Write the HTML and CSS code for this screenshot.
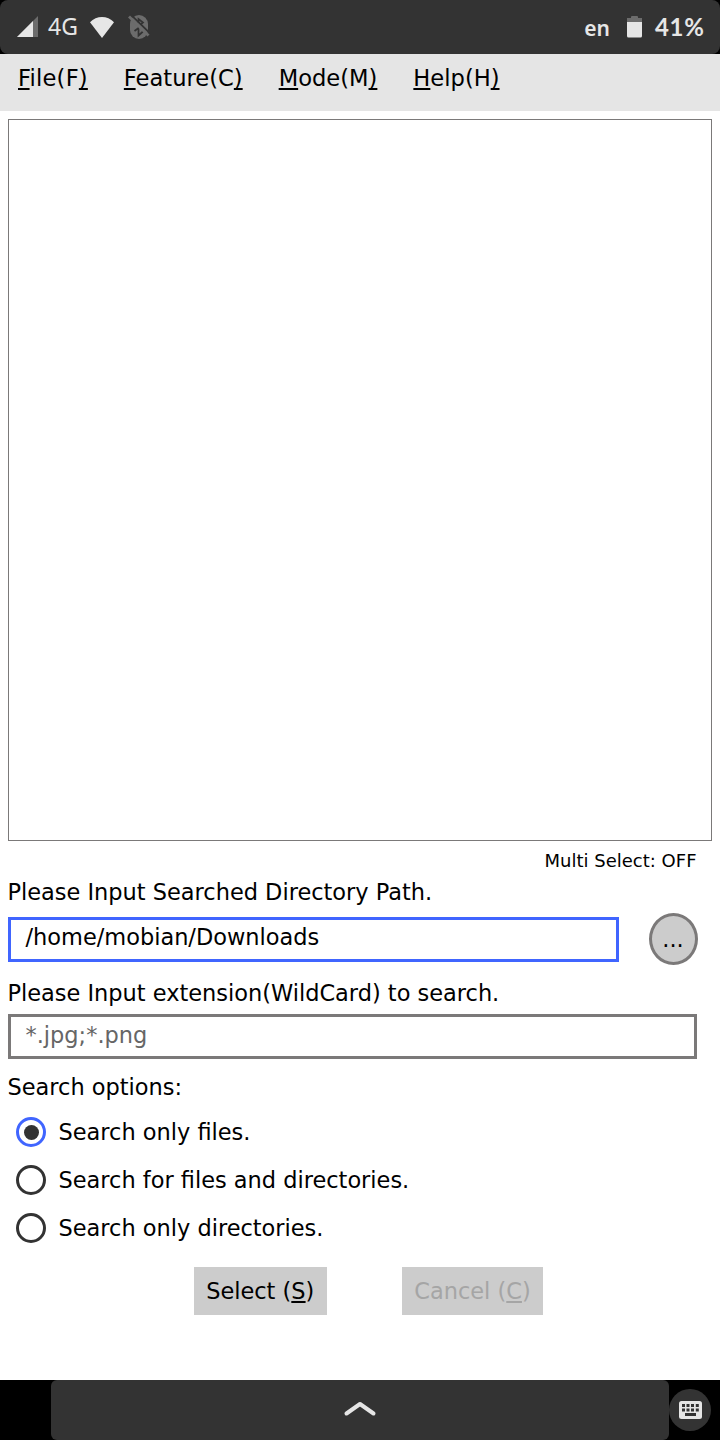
FILE: index.html
```html
<!DOCTYPE html>
<html lang="en">
<head>
<meta charset="utf-8">
<title>File search</title>
<link rel="stylesheet" href="styles.css">
</head>
<body>
<div class="screen">
  <div class="status-wrap">
    <header class="status">
      <svg class="signal" width="22" height="22" viewBox="0 0 22 22"><path d="M21 0v21H0z" fill="#6c6c6c"/><path d="M16 5v16H0z" fill="#e6e6e6"/></svg>
      <span class="network">4G</span>
      <svg class="wifi" width="24" height="21" viewBox="0 0 24 21"><path d="M0 5.2C6.5-1.7 17.500-1.7 24 5.200L12 21z" fill="#e6e6e6"/></svg>
      <svg class="bluetooth" width="22" height="26" viewBox="0 0 22 26">
        <rect x="2" y="1" width="18" height="24" rx="9" fill="#6c6c6c"/>
        <path d="M6.500 17L10.500 14V21.500L15 17.500M10.500 9V5L15 8.500L12.500 10.500" fill="none" stroke="#333" stroke-width="1.700"/>
        <path d="M3 .8L21.500 18.800" stroke="#333" stroke-width="1.800"/>
        <path d="M1 2.500L20.500 21.500" stroke="#6c6c6c" stroke-width="2.800"/>
      </svg>
      <span class="language">en</span>
      <svg class="battery" width="15" height="22" viewBox="0 0 15 22"><path d="M0 2h4V1q0-1 1-1h5q1 0 1 1v1h4v5H0z" fill="#6c6c6c"/><path d="M0 6h15v14q0 1.500-1.500 1.500h-12Q0 21.500 0 20z" fill="#e6e6e6"/></svg>
      <span class="percent">41%</span>
    </header>
  </div>
  <nav class="menu">
    <span class="first"><u>F</u>ile(F<u>)</u></span>
    <span><u>F</u>eature(C<u>)</u></span>
    <span><u>M</u>ode(M<u>)</u></span>
    <span><u>H</u>elp(H<u>)</u></span>
  </nav>
  <main class="content">
    <div class="results"></div>
    <div class="multi">Multi Select: OFF</div>
    <div class="label path-label">Please Input Searched Directory Path.</div>
    <div class="path-row">
      <div class="field path-field">/home/mobian/Downloads</div>
      <div class="browse"><span>...</span></div>
    </div>
    <div class="label ext-label">Please Input extension(WildCard) to search.</div>
    <div class="field ext-field">*.jpg;*.png</div>
    <div class="label options-label">Search options:</div>
    <div class="options">
      <div class="option"><span class="radio checked"></span><span>Search only files.</span></div>
      <div class="option"><span class="radio"></span><span>Search for files and directories.</span></div>
      <div class="option"><span class="radio"></span><span>Search only directories.</span></div>
    </div>
    <div class="actions">
      <div class="button select">Select (<u>S</u>)</div>
      <div class="button cancel">Cancel (<u>C</u>)</div>
    </div>
  </main>
  <footer class="bottom">
    <div class="home"><svg width="34" height="18" viewBox="0 0 34 18"><path d="M3.500 12.500L17 3L30.500 12.500" fill="none" stroke="#e6e6e6" stroke-width="4" stroke-linecap="round" stroke-linejoin="round"/></svg></div>
    <div class="keyboard"><svg width="23" height="18" viewBox="0 0 23 18"><rect width="23" height="18" rx="2.500" fill="#e6e6e6"/><path d="M3 3h3v3H3zM7.500 3h3v3h-3zM12 3h3v3h-3zM16.800 3h3v3h-3zM3 7.500h3v3H3zM7.500 7.500h3v3h-3zM12 7.500h3v3h-3zM16.800 7.500h3v3h-3zM6 12h11v3H6z" fill="#333"/></svg></div>
  </footer>
</div>
</body>
</html>
```
FILE: styles.css
```css
* { box-sizing: border-box; }
body { margin: 0; background: #fff; color: #000; font-family: "DejaVu Sans", sans-serif; font-size: 22.46px; }
svg { display: block; flex: none; }
.screen { width: 720px; height: 1440px; display: flex; flex-direction: column; overflow: hidden; white-space: nowrap; }
.status-wrap { height: 54px; background: #000; flex: none; }
.status { height: 54px; background: #333; border-radius: 8px; display: flex; align-items: center; padding: 0 15px 0 17px; color: #e6e6e6; font-family: "Noto Sans", sans-serif; }
.network { width: 30px; margin-left: 9px; font-size: 23px; padding-bottom: 2px; }
.wifi { margin-left: 12px; }
.bluetooth { margin-left: 14px; }
.language { margin-left: auto; font-size: 21px; font-weight: 600; padding-top: 1px; }
.battery { margin-left: 17px; }
.percent { width: 50px; margin-left: 13px; padding-bottom: 2px; font-family: Lato, sans-serif; font-weight: 700; font-size: 24px; letter-spacing: 0.7px; }
.menu { height: 57px; flex: none; background: #e5e5e5; display: flex; gap: 36px; padding: 10.6px 18px; font-size: 22.6px; line-height: 27px; }
.first { letter-spacing: 0.2px; }
u { text-decoration-thickness: 1.5px; text-underline-offset: 2px; text-decoration-skip-ink: none; }
.content { height: 1269px; flex: none; padding: 8px 7.5px; }
.results { width: 704.5px; height: 722px; border: 1.5px solid #7b7979; }
.multi { height: 24px; margin-top: 8px; padding-right: 16px; text-align: right; font-size: 18px; line-height: 24px; }
.label { height: 28px; line-height: 28px; }
.path-label { margin-top: 5px; }
.path-row { display: flex; align-items: center; gap: 29.5px; height: 52px; margin-top: 7px; }
.field { height: 45px; border: 3px solid #7b7979; padding: 0 15px; line-height: 36px; }
.path-field { width: 611.5px; border-color: #4065ff; line-height: 34px; }
.browse { width: 49px; height: 52px; border-radius: 50%; border: 3px solid #7b7979; background: #ccc; display: flex; justify-content: center; align-items: center; }
.ext-label { margin-top: 14px; }
.ext-field { width: 689.5px; margin-top: 7px; color: #666; }
.options-label { margin-top: 14px; }
.options { padding: 7px 0 0 8.5px; }
.option { display: flex; align-items: center; gap: 12.5px; height: 48px; }
.radio { width: 30px; height: 30px; border: 3px solid #333; border-radius: 50%; display: flex; }
.radio.checked { border-color: #4065ff; }
.checked::before { content: ""; margin: auto; width: 15px; height: 15px; border-radius: 50%; background: #333; }
.option span + span { line-height: 28px; }
.actions { display: flex; gap: 75px; padding: 15px 0 0 186px; }
.button { height: 48px; line-height: 48px; width: 133.500px; background: #ccc; text-align: center; }
.cancel { width: 141px; color: #a5a5a5; }
.bottom { height: 60px; flex: none; background: #000; display: flex; align-items: center; padding-left: 51px; }
.home { width: 618px; height: 60px; background: #333; border-radius: 6px; display: flex; justify-content: center; align-items: center; }
.keyboard { width: 42px; height: 42px; border-radius: 50%; background: #333; display: flex; justify-content: center; align-items: center; }
```
